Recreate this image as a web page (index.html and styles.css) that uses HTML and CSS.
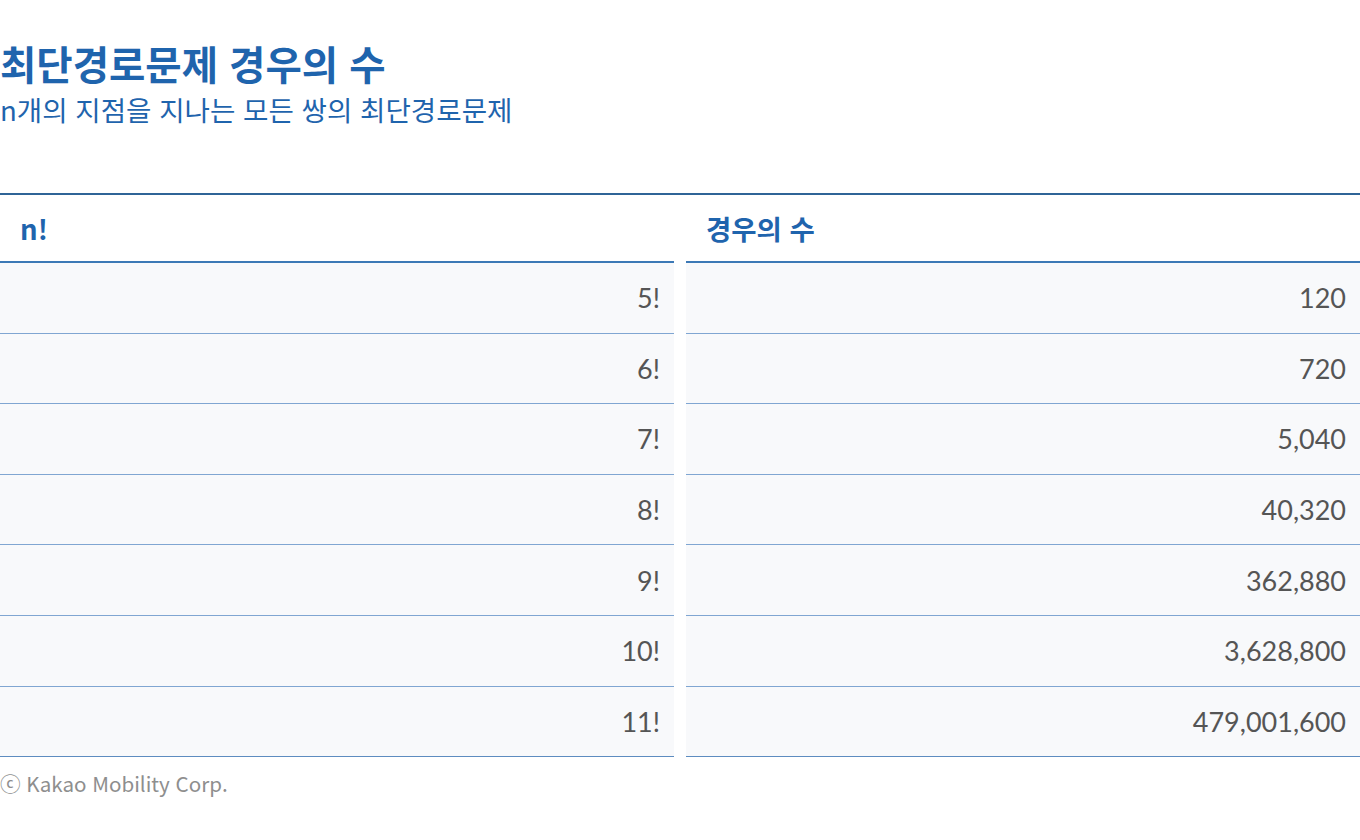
FILE: index.html
```html
<!DOCTYPE html>
<html lang="ko">
<head>
<meta charset="utf-8">
<title>최단경로문제 경우의 수</title>
<link rel="stylesheet" href="styles.css">
</head>
<body>
<header class="heading">
  <h1 class="title">최단경로문제 경우의 수</h1>
  <p class="subtitle">n개의 지점을 지나는 모든 쌍의 최단경로문제</p>
</header>
<div class="table">
  <div class="head">n!</div>
  <div class="head">경우의 수</div>
  <div class="cell">5!</div><div class="cell">120</div>
  <div class="cell">6!</div><div class="cell">720</div>
  <div class="cell">7!</div><div class="cell">5,040</div>
  <div class="cell">8!</div><div class="cell">40,320</div>
  <div class="cell">9!</div><div class="cell">362,880</div>
  <div class="cell">10!</div><div class="cell">3,628,800</div>
  <div class="cell last">11!</div><div class="cell last">479,001,600</div>
</div>
<footer class="credit">ⓒ Kakao Mobility Corp.</footer>
</body>
</html>
```
FILE: styles.css
```css
html, body {
  margin: 0;
  padding: 0;
  background: #ffffff;
}
body {
  width: 1360px;
  font-family: "Noto Sans CJK KR", "Noto Sans", sans-serif;
}
.heading {
  padding-top: 39px;
}
.title {
  margin: 0;
  font-size: 39.5px;
  line-height: 48px;
  font-weight: 700;
  color: #1f64ad;
}
.subtitle {
  margin: 5px 0 0;
  font-size: 27.6px;
  line-height: 34px;
  font-weight: 400;
  color: #1f64ad;
}
.table {
  margin-top: 67px;
  border-top: 2px solid #2f6497;
  display: grid;
  grid-template-columns: 1fr 1fr;
  column-gap: 12px;
}
.head {
  height: 66px;
  display: flex;
  align-items: center;
  padding-left: 20px;
  font-size: 27.5px;
  font-weight: 700;
  color: #1f64ad;
  border-bottom: 2px solid #3c79b6;
  background: #ffffff;
}
.cell {
  height: 69.6px;
  display: flex;
  align-items: center;
  justify-content: flex-end;
  padding-right: 14px;
  font-family: Lato, "Noto Sans CJK KR", sans-serif;
  font-size: 27px;
  color: #555555;
  background: #f8f9fb;
  border-bottom: 1px solid #80a6d2;
}
.cell.last {
  border-bottom-color: #5d8cc0;
}
.credit {
  margin-top: 12px;
  font-size: 20.6px;
  line-height: 28px;
  color: #8e8e8e;
}
```
